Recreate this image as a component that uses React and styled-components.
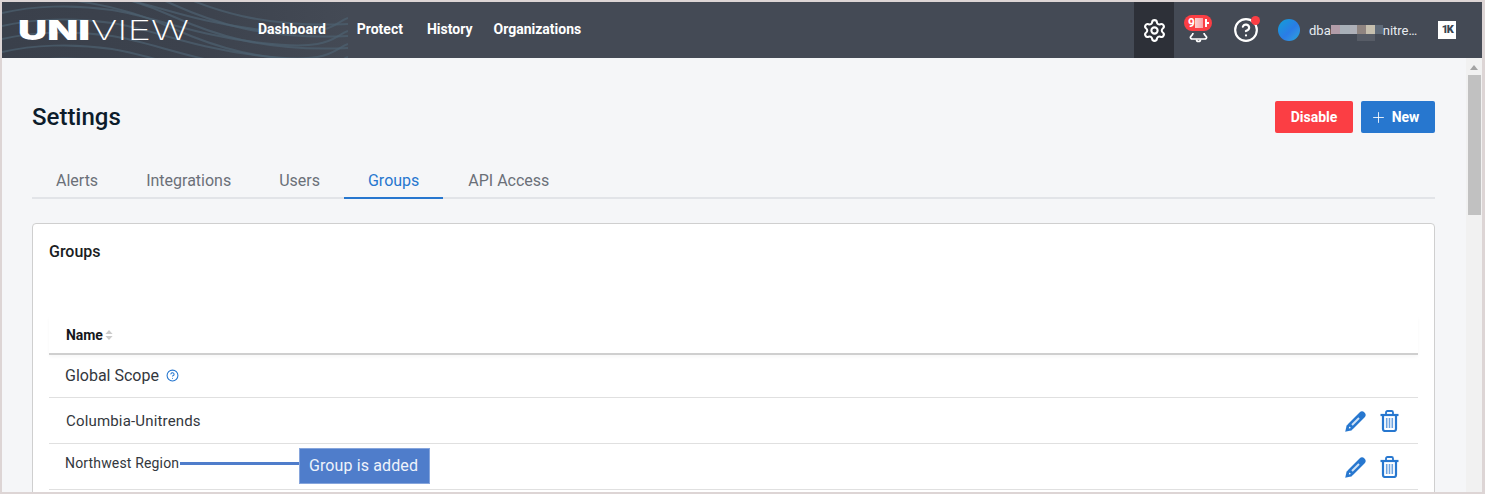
import React from 'react';
import styled, { createGlobalStyle } from 'styled-components';
import { Settings, Plus, HelpCircle } from 'lucide-react';

const GlobalStyle = createGlobalStyle`
	html, body {
		margin: 0;
		height: 100%;
		overflow: hidden;
		font-family: 'Roboto', 'Liberation Sans', sans-serif;
	}
	* { box-sizing: border-box; }
`;

const Frame = styled.div`
	width: 1485px;
	height: 494px;
	border: solid #ddd5d5;
	border-width: 2px 3px 2px 2px;
	display: flex;
	flex-direction: column;
	overflow: hidden;
	background: #f5f6f8;
`;

const Header = styled.header`
	position: relative;
	flex: none;
	height: 56px;
	background: #444a55;
	display: flex;
	align-items: center;
	overflow: hidden;
	color: #fff;
`;

const Waves = styled.svg`
	position: absolute;
	left: 0;
	top: 0;
	width: 346px;
	height: 56px;
	background: linear-gradient(90deg, #3a404b 0%, #3c424d 55%, #444a55 100%);
`;

const Logo = styled.svg`
	position: relative;
	flex: none;
	width: 174px;
	height: 40px;
	margin-left: 16px;
`;

const Nav = styled.nav`
	position: relative;
	display: flex;
	align-items: center;
	margin-left: 66px;
	padding-bottom: 2px;
	flex: 1;
`;

const NavLink = styled.a`
	font-size: 14px;
	font-weight: 700;
	margin-right: ${(p) => p.$gap}px;
`;

const Tools = styled.div`
	position: relative;
	display: flex;
	align-items: center;
	height: 100%;
`;

const GearCell = styled.div`
	width: 40px;
	height: 100%;
	background: #2d3038;
	display: flex;
	align-items: center;
	justify-content: center;
`;

const BellCell = styled.div`
	position: relative;
	width: 28px;
	height: 100%;
	margin-left: 10px;
`;

const Badge = styled.span`
	position: absolute;
	left: 0;
	top: 13px;
	width: 28px;
	height: 16px;
	border-radius: 8px;
	background: #fb3e44;
	font-size: 12px;
	font-weight: 700;
	line-height: 16px;
	padding-left: 4px;
`;

const BadgeBlur = styled.i`
	position: absolute;
	left: 11px;
	top: 3px;
	width: 8px;
	height: 10px;
	background: linear-gradient(90deg, #fbd0d2, #f7a3a7);
`;

const BadgeTick = styled.i`
	position: absolute;
	left: 21px;
	top: 4px;
	width: 2px;
	height: 8px;
	background: #fff;
	&::after {
		content: '';
		position: absolute;
		left: 2px;
		top: 3px;
		width: 2px;
		height: 2px;
		background: #fff;
	}
`;

const BellBottom = styled.svg`
	position: absolute;
	left: 5px;
	top: 31px;
`;

const HelpCell = styled.div`
	position: relative;
	display: flex;
	margin-left: 21px;
`;

const RedDot = styled.span`
	position: absolute;
	right: -1px;
	top: -1px;
	width: 9px;
	height: 9px;
	border-radius: 50%;
	background: #fb3e44;
`;

const Avatar = styled.span`
	width: 22px;
	height: 22px;
	border-radius: 50%;
	margin-left: 19px;
	background: linear-gradient(135deg, #12a0d6 0%, #2a7ce6 55%, #2f8ee2 75%, #16acd0 100%);
`;

const UserName = styled.span`
	display: flex;
	align-items: center;
	margin-left: 9px;
	width: 108px;
	font-size: 13px;
	color: #e8ecf0;
	white-space: nowrap;
`;

const Mosaic = styled.span`
	position: relative;
	display: flex;
	flex: none;
	width: 52px;
	height: 9px;
	transform: translateY(-1px);
`;

const Pixel = styled.i`
	flex: none;
	width: ${(p) => p.$w}px;
	height: 9px;
	background: ${(p) => p.$c};
`;

const MosaicDrop = styled.i`
	position: absolute;
	left: 26px;
	top: 9px;
	width: 18px;
	height: 7px;
	background: #575c66;
`;

const KBox = styled.div`
	width: 18px;
	height: 18px;
	margin-left: 21px;
	margin-right: 26px;
	background: #fff;
	color: #3a4450;
	font-size: 11px;
	font-weight: 900;
	line-height: 18px;
	text-align: center;
	letter-spacing: -1.5px;
`;

const Body = styled.div`
	flex: 1;
	display: flex;
	min-height: 0;
`;

const Main = styled.main`
	flex: 1;
	padding: 43px 31px 0 30px;
	min-width: 0;
`;

const TitleRow = styled.div`
	display: flex;
	align-items: center;
	justify-content: space-between;
	height: 32px;
`;

const Title = styled.h1`
	margin: 0;
	font-size: 24px;
	font-weight: 500;
	color: #0d1c2b;
`;

const Buttons = styled.div`
	display: flex;
	gap: 8px;
`;

const Button = styled.button`
	height: 32px;
	width: ${(p) => p.$w}px;
	border: 0;
	border-radius: 2px;
	padding: 0 ${(p) => p.$pr || 0}px 0 0;
	background: ${(p) => p.$bg};
	color: #fff;
	font-family: inherit;
	font-size: 14px;
	font-weight: 700;
	display: flex;
	align-items: center;
	justify-content: center;
	gap: 5px;
`;

const Tabs = styled.div`
	display: flex;
	margin-top: 32px;
	height: 34px;
	border-bottom: 2px solid #e2e4e8;
`;

const Tab = styled.div`
	padding: 0 24px;
	height: 34px;
	line-height: 32px;
	font-size: 16px;
	margin-left: ${(p) => p.$nudge || 0}px;
	color: ${(p) => (p.$active ? '#2777cf' : '#6b7078')};
	border-bottom: 2px solid ${(p) => (p.$active ? '#2777cf' : 'transparent')};
`;

const Card = styled.section`
	position: relative;
	margin-top: 24px;
	height: 320px;
	background: #fff;
	border: 1px solid #cfcfcf;
	border-radius: 4px;
	padding: 0 16px;
`;

const CardTitle = styled.h2`
	margin: 0;
	padding-top: 18px;
	height: 92px;
	font-size: 16px;
	font-weight: 500;
	line-height: 20px;
	color: #1a1d22;
`;

const HeadRow = styled.div`
	display: flex;
	align-items: center;
	height: 39px;
	padding-left: 17px;
	border-bottom: 2px solid #cfcfcf;
	box-shadow: 0 2px 3px rgba(0, 0, 0, 0.03);
	font-size: 14px;
	font-weight: 700;
	letter-spacing: -0.05px;
	color: #15171c;
	gap: 2px;
`;

const Row = styled.div`
	display: flex;
	align-items: center;
	justify-content: space-between;
	height: ${(p) => p.$h}px;
	padding: 0 19px 0 16px;
	border-bottom: 1px solid #e0e0e0;
	color: #33373d;
`;

const RowName = styled.span`
	display: flex;
	align-items: center;
	gap: 7px;
	font-size: ${(p) => p.$size}px;
	letter-spacing: ${(p) => p.$spacing || 0}px;
	margin-left: ${(p) => p.$indent || 0}px;
	transform: translateY(${(p) => p.$shift || 0}px);
`;

const Actions = styled.span`
	display: flex;
	align-items: center;
	gap: 13px;
`;

const Callout = styled.div`
	position: absolute;
	left: 266px;
	top: 224px;
	width: 131px;
	height: 36px;
	padding-right: 2px;
	background: #4f7dcb;
	border: 1px solid #86a5dc;
	color: #eef3fb;
	font-size: 16px;
	letter-spacing: 0.12px;
	line-height: 34px;
	text-align: center;
`;

const CalloutLine = styled.div`
	position: absolute;
	left: 147px;
	top: 238px;
	width: 119px;
	height: 3px;
	background: #4f7dcb;
`;

const Scrollbar = styled.div`
	flex: none;
	width: 16px;
	background: #f1f1f1;
	display: flex;
	flex-direction: column;
	align-items: center;
	padding-top: 7px;
`;

const ScrollArrow = styled.span`
	width: 0;
	height: 0;
	border: 4px solid transparent;
	border-top: 0;
	border-bottom: 5px solid #a3a3a3;
`;

const ScrollThumb = styled.div`
	width: 13px;
	height: 140px;
	margin-top: 5px;
	background: #c1c1c1;
`;

const leftWaves = [-2, 11, 24, 37, 50, 63].map(
	(y) => `M0 ${y} C30 ${y - 7} 70 ${y - 9} 110 ${y - 3} S190 ${y + 22} 260 ${y + 30} S330 ${y + 24} 346 ${y + 18}`,
);
const upperWaves = [-40, -28, -16, -4].map(
	(y) => `M40 ${y} C90 ${y + 2} 130 ${y + 12} 170 ${y + 30} S260 ${y + 66} 346 ${y + 62}`,
);

const Pencil = () => (
	<svg width="22" height="22" viewBox="0 0 22 22">
		<path d="M5.5 16.5 17 5" stroke="#2777cf" strokeWidth="7" strokeLinecap="round" />
		<path d="M7 15 14 8" stroke="#cfe1f5" strokeWidth="2" />
		<path d="M.2 21.8 1.8 15l5.2 5.2z" fill="#2777cf" />
		<path d="M3.8 18.4 4.3 16.4l1.7 1.7z" fill="#fff" />
	</svg>
);

const Trash = () => (
	<svg width="19" height="22" viewBox="0 0 19 22" fill="none" stroke="#2777cf">
		<path d="M3 6v13a2 2 0 0 0 2 2h9a2 2 0 0 0 2-2V6" strokeWidth="2.2" />
		<path d="M.5 5h18" strokeWidth="2.2" />
		<path d="M6 4.5V2.5a1.5 1.5 0 0 1 1.5-1.5h4A1.5 1.5 0 0 1 13 2.5v2" strokeWidth="1.8" />
		<path d="M6.7 8v10M9.5 8v10M12.3 8v10" stroke="#6ea3e0" strokeWidth="1.6" />
	</svg>
);

const SortIcon = () => (
	<svg width="8" height="10" viewBox="0 0 8 10" fill="#cbcbcb">
		<path d="M4 0l3.6 4H.4zM4 10 .4 6h7.2z" />
	</svg>
);

const RowActions = () => (
	<Actions>
		<Pencil />
		<Trash />
	</Actions>
);

const mosaic = [
	[9, '#b29ca8'], [10, '#a8b0b8'], [7, '#aeb0b8'], [9, '#8f8480'], [9, '#c6bfae'], [8, '#5f6a78'],
];

export default function App() {
	return (
		<Frame>
			<GlobalStyle />
			<Header>
				<Waves viewBox="0 0 346 56" fill="none" stroke="#4d6170" strokeOpacity="0.7" strokeWidth="2">
					{leftWaves.concat(upperWaves).map((d) => (
						<path key={d} d={d} />
					))}
				</Waves>
				<Logo viewBox="0 0 174 40">
					<text x="0" y="30" fontFamily="Inter, sans-serif" fontWeight="900" fontSize="27.5" fill="#fff" textLength="72" lengthAdjust="spacingAndGlyphs">UNI</text>
					<text x="73" y="30" fontFamily="Inter, sans-serif" fontWeight="200" fontSize="27.5" fill="#fff" textLength="98" lengthAdjust="spacingAndGlyphs">VIEW</text>
				</Logo>
				<Nav>
					<NavLink $gap={31}>Dashboard</NavLink>
					<NavLink $gap={24}>Protect</NavLink>
					<NavLink $gap={21}>History</NavLink>
					<NavLink $gap={0}>Organizations</NavLink>
				</Nav>
				<Tools>
					<GearCell>
						<Settings size={25} strokeWidth={2} />
					</GearCell>
					<BellCell>
						<Badge>
							9
							<BadgeBlur />
							<BadgeTick />
						</Badge>
						<BellBottom width="19" height="11" viewBox="0 0 19 11" fill="none" stroke="#fff" strokeWidth="1.7">
							<path d="M4 0c0 2-2 3-2.5 4-.5 1 .5 2 2 2h12c1.5 0 2.5-1 2-2-.5-1-2.5-2-2.5-4" />
							<path d="M7.5 6.5a2 2 0 0 0 4 0" />
						</BellBottom>
					</BellCell>
					<HelpCell>
						<HelpCircle size={26} strokeWidth={2} />
						<RedDot />
					</HelpCell>
					<Avatar />
					<UserName>
						dba
						<Mosaic>
							{mosaic.map(([w, c]) => (
								<Pixel key={c} $w={w} $c={c} />
							))}
							<MosaicDrop />
						</Mosaic>
						nitre…
					</UserName>
					<KBox>1K</KBox>
				</Tools>
			</Header>
			<Body>
				<Main>
					<TitleRow>
						<Title>Settings</Title>
						<Buttons>
							<Button $w={78} $bg="#fb3e44">Disable</Button>
							<Button $w={74} $bg="#2777cf" $pr={7}>
								<Plus size={17} strokeWidth={1.2} />
								New
							</Button>
						</Buttons>
					</TitleRow>
					<Tabs>
						<Tab>Alerts</Tab>
						<Tab>Integrations</Tab>
						<Tab>Users</Tab>
						<Tab $active>Groups</Tab>
						<Tab $nudge={1}>API Access</Tab>
					</Tabs>
					<Card>
						<CardTitle>Groups</CardTitle>
						<HeadRow>
							Name
							<SortIcon />
						</HeadRow>
						<Row $h={43}>
							<RowName $size={16} $shift={-1}>
								Global Scope
								<HelpCircle size={13} color="#2777cf" />
							</RowName>
						</Row>
						<Row $h={46}>
							<RowName $size={15} $spacing={0.17} $indent={1}>Columbia-Unitrends</RowName>
							<RowActions />
						</Row>
						<Row $h={46}>
							<RowName $size={14} $spacing={0.16} $shift={-4}>Northwest Region</RowName>
							<RowActions />
						</Row>
						<CalloutLine />
						<Callout>Group is added</Callout>
					</Card>
				</Main>
				<Scrollbar>
					<ScrollArrow />
					<ScrollThumb />
				</Scrollbar>
			</Body>
		</Frame>
	);
}
